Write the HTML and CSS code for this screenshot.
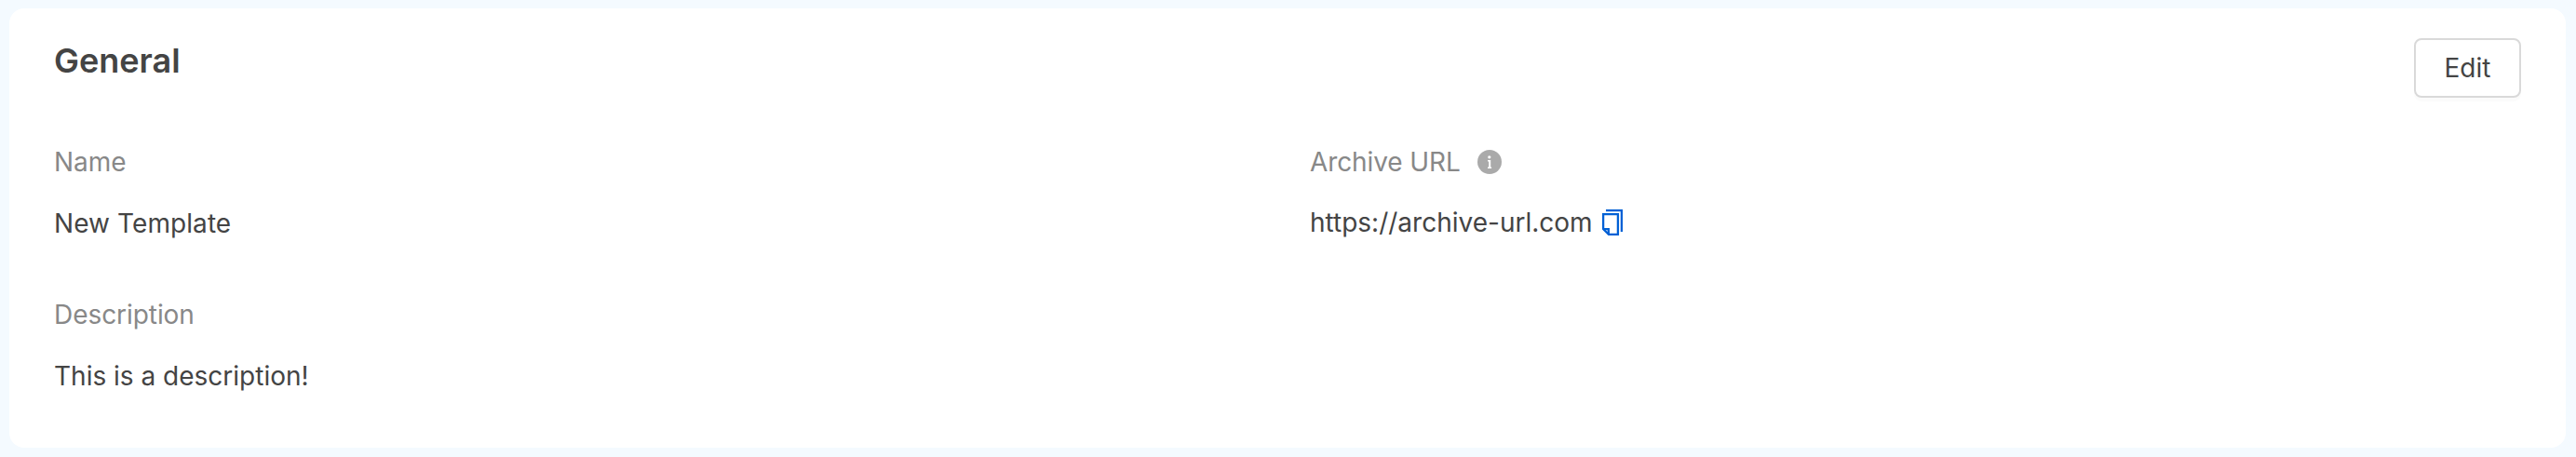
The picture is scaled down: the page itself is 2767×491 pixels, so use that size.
FILE: index.html
```html
<!DOCTYPE html>
<html lang="en">
<head>
<meta charset="utf-8">
<title>General</title>
<link rel="stylesheet" href="styles.css">
</head>
<body>
<section class="card">
  <header class="card-header">
    <h2 class="card-title">General</h2>
    <button class="edit-button" type="button">Edit</button>
  </header>
  <dl class="fields">
    <div class="field">
      <dt class="label">Name</dt>
      <dd class="value value-name">New Template</dd>
    </div>
    <div class="field field-url">
      <dt class="label">Archive URL
        <svg class="info-icon" width="26" height="26" viewBox="0 0 26 26" aria-hidden="true">
          <circle cx="13" cy="13" r="13" fill="#aaa"/>
          <circle cx="12.8" cy="7.8" r="1.6" fill="#fff"/>
          <path d="M11 11h3.2v7.4h.9v1.6h-4.1v-1.6h1.2v-5.8h-1.2z" fill="#fff"/>
        </svg>
      </dt>
      <dd class="value">https://archive-url.com
        <svg class="copy-icon" width="22" height="28" viewBox="0 0 22 28" fill="none" stroke="#0060d5" stroke-width="2.3" aria-hidden="true">
          <path d="M4 1.1h16.9V24"/>
          <path d="M1.1 5.1h15.8v21.8H7l-5.9-5.9z"/>
          <path d="M1.1 21.2h5.7v5.7"/>
        </svg>
      </dd>
    </div>
    <div class="field">
      <dt class="label label-description">Description</dt>
      <dd class="value">This is a description!</dd>
    </div>
  </dl>
</section>
</body>
</html>
```
FILE: styles.css
```css
* {
  box-sizing: border-box;
}

body {
  margin: 0;
  height: 491px;
  padding: 9px 11px 10px 10px;
  background: #f4faff;
  color: #444;
  font-family: Inter, "Liberation Sans", sans-serif;
  font-size: 28px;
  line-height: 44px;
}

.card {
  height: 472px;
  padding: 32px 48px 0;
  border-radius: 16px;
  background: #fff;
}

.card-header {
  display: flex;
  justify-content: space-between;
  align-items: flex-start;
  height: 111px;
}

.card-title {
  margin: 0;
  font-size: 36px;
  font-weight: 600;
  line-height: 48px;
}

.edit-button {
  width: 115px;
  height: 64px;
  padding: 0;
  border: 2px solid #d9d9d9;
  border-radius: 8px;
  background: #fff;
  box-shadow: 0 4px 0 rgba(0, 0, 0, 0.016);
  color: #444;
  font: inherit;
}

.fields {
  display: grid;
  grid-template-columns: 1fr 1fr;
  gap: 54px 48px;
  margin: 0;
}

.field {
  display: flex;
  flex-direction: column;
  gap: 22px;
}

.field-url {
  gap: 21px;
}

.label,
.value {
  display: flex;
  align-items: center;
  height: 44px;
  margin: 0;
}

.label {
  color: #888;
}

.value-name {
  letter-spacing: 0.08px;
}

.field-url .label {
  letter-spacing: -0.1px;
}

.label-description {
  letter-spacing: -0.06px;
}

.info-icon {
  margin-left: 18px;
}

.copy-icon {
  margin-left: 10px;
}
```
